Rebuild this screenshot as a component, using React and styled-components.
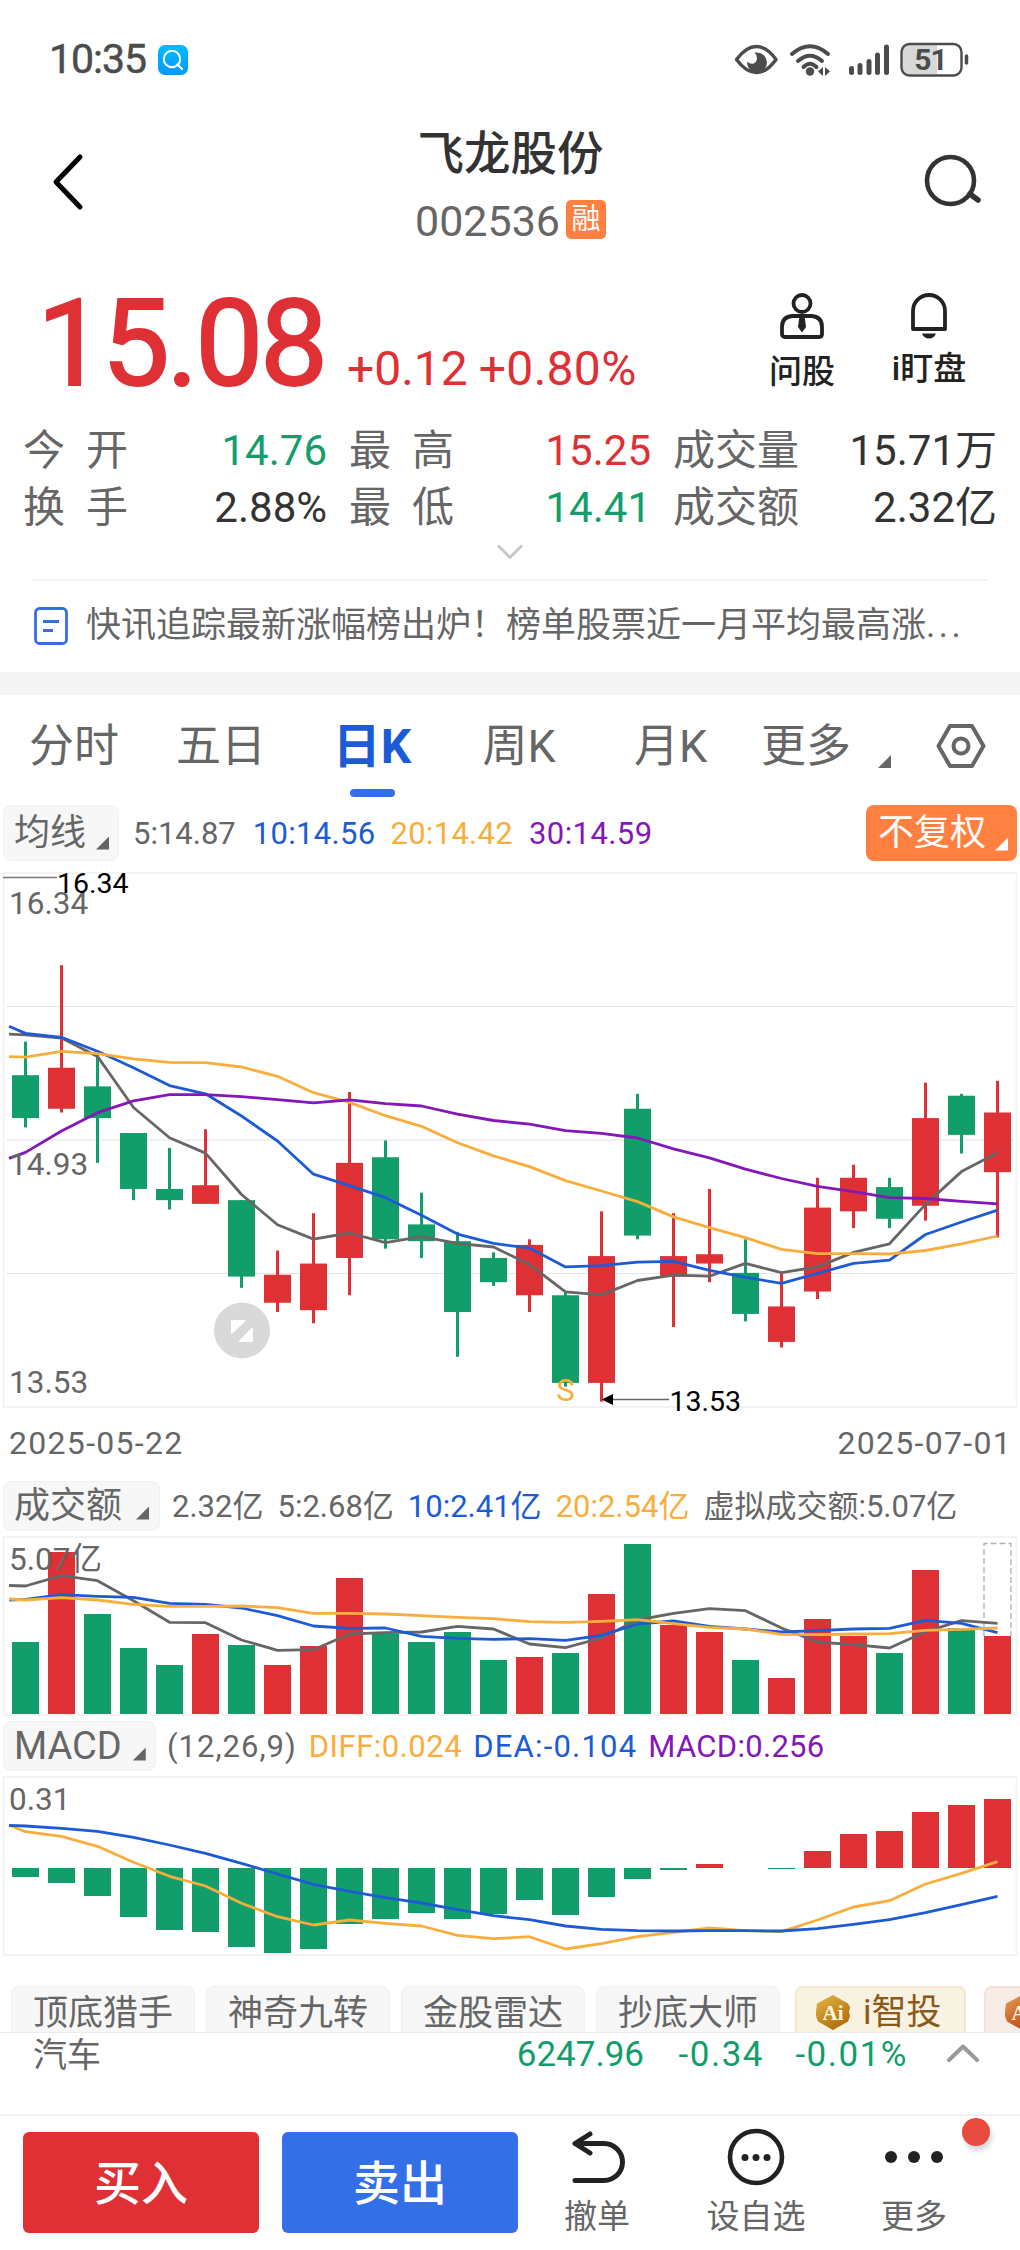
import React from 'react';
import styled, { createGlobalStyle } from 'styled-components';

const RED = '#df3035';
const GREEN = '#129e6a';
const BLUE = '#1d5bd6';
const ORANGE = '#f8ae3c';
const PURPLE = '#8417b8';
const GREY = '#666666';

const GlobalStyle = createGlobalStyle`
    * {
        box-sizing: border-box;
    }
    body {
        margin: 0;
        background: #fff;
        font-family: Roboto, "Noto Sans CJK SC", sans-serif;
        line-height: 1;
        color: #333;
    }
    svg {
        display: block;
        flex: none;
        overflow: visible;
    }
`
const Screen = styled.div`
    width: 1020px;
    height: 2250px;
    overflow: hidden;
    background: #fff;
    white-space: nowrap;
`

/* ---------- status bar ---------- */
const StatusBar = styled.div`
    display: flex;
    align-items: center;
    justify-content: space-between;
    height: 119px;
    padding: 0 51px 0 49px;
`
const Clock = styled.div`
    display: flex;
    align-items: center;
    gap: 12px;
    font-size: 41px;
    letter-spacing: -1px;
    -webkit-text-stroke: 0.5px #4c4c4c;
    color: #4c4c4c;
`
const StatusIcons = styled.div`
    display: flex;
    align-items: center;
`

/* ---------- header ---------- */
const Header = styled.div`
    display: grid;
    grid-template-columns: 1fr auto 1fr;
    align-items: center;
    height: 125px;
    padding: 0 38px 0 52px;
`
const HeaderEnd = styled.div`
    display: flex;
    justify-content: flex-end;
`
const TitleBlock = styled.div`
    display: flex;
    flex-direction: column;
    align-items: center;
    height: 125px;
    padding-top: 8px;
    margin-left: -13px;
`
const StockName = styled.div`
    font-size: 46.5px;
    line-height: 54px;
    font-weight: 500;
`
const StockCode = styled.div`
    display: flex;
    align-items: center;
    gap: 6px;
    margin-top: 19px;
    font-size: 43px;
    line-height: 43px;
    color: ${GREY};
`
const MarginBadge = styled.span`
    width: 40px;
    height: 39px;
    margin-bottom: 4px;
    border-radius: 5px;
    background: #ff8040;
    color: #fff;
    font-size: 29px;
    line-height: 39px;
    text-align: center;
`

/* ---------- quote ---------- */
const QuoteTop = styled.div`
    display: flex;
    justify-content: space-between;
    height: 161px;
    padding: 40px 53px 0 37px;
`
const PriceGroup = styled.div`
    display: flex;
    align-items: baseline;
    height: 121px;
    color: ${RED};
`
const Price = styled.span`
    width: 287px;
    font-size: 121px;
    letter-spacing: -3.2px;
    -webkit-text-stroke: 2px ${RED};
`
const Change = styled.span`
    margin-left: ${(props) => props.$gap}px;
    font-size: 48px;
    letter-spacing: ${(props) => props.$spacing || 0}px;
`
const Actions = styled.div`
    display: flex;
    gap: 57px;
    padding-top: 9px;
`
const Action = styled.div`
    display: flex;
    flex-direction: column;
    align-items: center;
    width: ${(props) => props.$width}px;
    color: #222;
    font-size: 33px;
    font-weight: 500;
    span {
        margin-top: ${(props) => props.$gap}px;
    }
`
const Stats = styled.div`
    display: grid;
    grid-template-columns: 304px 302px 324px;
    grid-auto-rows: 57px;
    column-gap: 22px;
    padding: 17px 0 0 23px;
    height: 131px;
`
const Stat = styled.div`
    display: flex;
    align-items: center;
    justify-content: space-between;
    font-size: 42px;
`
const StatLabel = styled.span`
    display: flex;
    justify-content: space-between;
    width: ${(props) => (props.$wide ? 125 : 105)}px;
    color: ${GREY};
`
const StatValue = styled.span`
    color: ${(props) => props.$color || '#333'};
`
const Expand = styled.div`
    display: flex;
    justify-content: center;
    height: 43px;
    padding-top: 7px;
`
const News = styled.div`
    display: flex;
    align-items: center;
    height: 93px;
    margin: 0 32px;
    padding: 0 0 2px 2px;
    border-top: 2px solid #f3f3f3;
    color: ${GREY};
    font-size: 35px;
    span {
        margin-left: 18px;
    }
    b {
        font-weight: 400;
        letter-spacing: 3.5px;
    }
`
const Band = styled.div`
    height: 23px;
    background: #f4f4f4;
`

/* ---------- tabs ---------- */
const Tabs = styled.div`
    display: flex;
    height: 102px;
`
const Tab = styled.div`
    display: flex;
    flex-direction: column;
    align-items: center;
    justify-content: space-between;
    width: ${(props) => props.$width}px;
    font-size: ${(props) => (props.$active ? 48 : 45)}px;
    line-height: 104px;
    font-weight: ${(props) => (props.$active ? 700 : 400)};
    color: ${(props) => (props.$active ? BLUE : GREY)};
    &::after {
        content: '';
        width: 45px;
        height: 8px;
        margin-top: -13px;
        border-radius: 4px;
        background: ${(props) => (props.$active ? '#336fe6' : 'transparent')};
    }
`
const MoreTab = styled.div`
    display: flex;
    align-items: center;
    padding-left: 8px;
    font-size: 45px;
    color: ${GREY};
`
const Corner = styled.i`
    width: 13px;
    height: 13px;
    margin: ${(props) => props.$margin};
    background: currentColor;
    clip-path: polygon(100% 0, 100% 100%, 0 100%);
`

/* ---------- indicator headers ---------- */
const IndicatorRow = styled.div`
    display: flex;
    align-items: center;
    height: ${(props) => props.$height}px;
    margin-top: ${(props) => props.$top}px;
    padding: 0 3px;
`
const Picker = styled.div`
    display: flex;
    align-items: center;
    width: ${(props) => props.$width}px;
    height: 100%;
    padding-left: 10px;
    border: 1px solid #f0f0f0;
    border-radius: 8px;
    background: #f7f7f7;
    color: ${GREY};
    font-size: ${(props) => props.$size || 36}px;
`
const Reading = styled.span`
    margin-left: ${(props) => props.$gap}px;
    font-size: 31px;
    letter-spacing: ${(props) => props.$spacing || 0}px;
    color: ${(props) => props.$color || GREY};
`
const AdjustButton = styled.div`
    display: flex;
    align-items: center;
    width: 151px;
    height: 56px;
    margin-left: auto;
    padding-left: 12px;
    border-radius: 8px;
    background: #ff8040;
    color: #fff;
    font-size: 36px;
`
const ChartBox = styled.div`
    margin-top: ${(props) => props.$top}px;
`
const Dates = styled.div`
    display: flex;
    align-items: center;
    justify-content: space-between;
    height: 69px;
    padding: 0 8px 0 9px;
    color: ${GREY};
    font-size: 32px;
    letter-spacing: 1.3px;
`

/* ---------- strategy chips ---------- */
const Chips = styled.div`
    display: flex;
    gap: 11px;
    height: 46px;
    margin-top: 30px;
    padding-left: 11px;
    overflow: hidden;
`
const Chip = styled.div`
    flex: none;
    width: 184px;
    height: 60px;
    border: 1px solid #efefef;
    border-radius: 8px;
    background: #f7f7f7;
    color: ${GREY};
    font-size: 35px;
    line-height: 54px;
    text-align: center;
`
const SmartChip = styled(Chip)`
    display: flex;
    align-items: center;
    gap: 12px;
    width: 171px;
    margin-left: ${(props) => props.$gap}px;
    padding: 0 0 7px 18px;
    border: 2px solid ${(props) => props.$border};
    background: ${(props) => props.$fill};
    color: #8c5a18;
`

/* ---------- sector quote ---------- */
const Sector = styled.div`
    display: flex;
    height: 82px;
    padding: 5px 40px 0 33px;
    border-top: 1px solid #ebebeb;
    font-size: 34px;
    line-height: 34px;
    color: ${GREY};
    svg {
        margin: 5px 0 0 auto;
    }
`
const SectorValue = styled.span`
    width: ${(props) => props.$width}px;
    margin-left: ${(props) => props.$gap}px;
    color: ${GREEN};
    font-size: 35px;
    letter-spacing: ${(props) => props.$spacing || 0}px;
    text-align: right;
`

/* ---------- bottom bar ---------- */
const BottomBar = styled.div`
    display: flex;
    height: 136px;
    padding: 16px 0 0 23px;
    border-top: 2px solid #f1f1f1;
`
const TradeButton = styled.div`
    width: 236px;
    height: 101px;
    margin-right: 23px;
    border-radius: 6px;
    background: ${(props) => props.$color};
    color: #fff;
    font-size: 47px;
    font-weight: 500;
    line-height: 103px;
    text-align: center;
`
const Tool = styled.div`
    position: relative;
    display: flex;
    flex-direction: column;
    align-items: center;
    width: ${(props) => props.$width}px;
    margin-left: ${(props) => props.$gap}px;
    color: ${GREY};
    font-size: 33px;
    span {
        margin-top: 14px;
    }
`
const RedDot = styled.i`
    position: absolute;
    top: -14px;
    right: -43px;
    width: 28px;
    height: 28px;
    border-radius: 50%;
    background: #e74c3f;
    box-shadow: 2px 5px 5px rgba(0, 0, 0, 0.15);
`

// [open, close, high, low, up]
const candles = [
    [15.28, 15.05, 15.46, 15.0, 0],
    [15.1, 15.32, 15.87, 15.08, 1],
    [15.22, 15.05, 15.4, 14.81, 0],
    [14.97, 14.67, 14.97, 14.61, 0],
    [14.67, 14.61, 14.89, 14.56, 0],
    [14.59, 14.69, 14.99, 14.59, 1],
    [14.61, 14.2, 14.61, 14.14, 0],
    [14.06, 14.21, 14.34, 14.01, 1],
    [14.02, 14.27, 14.54, 13.95, 1],
    [14.3, 14.81, 15.19, 14.1, 1],
    [14.84, 14.4, 14.93, 14.35, 0],
    [14.48, 14.39, 14.65, 14.3, 0],
    [14.39, 14.01, 14.44, 13.77, 0],
    [14.3, 14.17, 14.33, 14.15, 0],
    [14.1, 14.37, 14.4, 14.01, 1],
    [14.1, 13.63, 14.12, 13.61, 0],
    [13.63, 14.31, 14.55, 13.53, 1],
    [15.1, 14.42, 15.18, 14.4, 0],
    [14.2, 14.31, 14.54, 13.93, 1],
    [14.27, 14.32, 14.67, 14.17, 1],
    [14.22, 14.0, 14.4, 13.96, 0],
    [13.85, 14.04, 14.22, 13.82, 1],
    [14.12, 14.57, 14.73, 14.08, 1],
    [14.55, 14.73, 14.8, 14.46, 1],
    [14.68, 14.51, 14.73, 14.46, 0],
    [14.58, 15.05, 15.24, 14.5, 1],
    [15.17, 14.96, 15.18, 14.86, 0],
    [14.76, 15.08, 15.25, 14.41, 1],
];

const ma = {
    5: [15.5, 15.496, 15.479, 15.381, 15.107, 14.945, 14.862, 14.64, 14.478, 14.401, 14.434, 14.382, 14.414, 14.378, 14.359, 14.265, 14.118, 14.102, 14.179, 14.208, 14.202, 14.271, 14.221, 14.252, 14.33, 14.376, 14.587, 14.763, 14.864],
    10: [15.542, 15.504, 15.483, 15.408, 15.32, 15.224, 15.18, 15.061, 14.927, 14.749, 14.688, 14.623, 14.529, 14.428, 14.378, 14.353, 14.252, 14.259, 14.278, 14.282, 14.234, 14.196, 14.164, 14.217, 14.271, 14.288, 14.426, 14.493, 14.556],
    20: [15.379, 15.377, 15.408, 15.396, 15.368, 15.349, 15.347, 15.324, 15.274, 15.186, 15.134, 15.063, 15.006, 14.918, 14.847, 14.79, 14.715, 14.659, 14.602, 14.52, 14.462, 14.409, 14.346, 14.323, 14.323, 14.321, 14.34, 14.376, 14.418],
    30: [14.834, 14.866, 14.981, 15.079, 15.142, 15.176, 15.176, 15.165, 15.149, 15.132, 15.148, 15.127, 15.115, 15.071, 15.037, 15.017, 14.983, 14.968, 14.943, 14.885, 14.837, 14.776, 14.726, 14.684, 14.656, 14.623, 14.619, 14.604, 14.59],
};

const volumes = [72, 162, 100, 66, 49, 80, 69, 49, 68, 136, 80, 72, 82, 54, 57, 61, 120, 170, 89, 82, 54, 36, 95, 78, 61, 144, 86, 78];

const volumeMa = {
    5: [49.5, 50, 39.7, 44.7, 64.7, 86.3, 86.7, 104, 114.3, 113.7, 98, 96.7, 96, 90.3, 93, 108, 111.7, 102, 84, 77.3, 72.7, 74.7, 92, 106, 108.7, 112, 95.7, 84.7, 87.3],
    10: [64, 63.3, 58.7, 60.3, 61.3, 67.3, 68.3, 72, 79.7, 90, 92.3, 92, 100.3, 102.3, 103.3, 102.7, 104.3, 99.3, 88, 85, 90.3, 93, 96, 94.7, 93, 92.3, 84.3, 87.3, 96.7],
    20: [63, 64, 61.7, 64, 68.3, 70.3, 70.3, 70, 71.7, 77.3, 77.3, 78, 79.7, 81.3, 82.7, 85.7, 86.3, 85.3, 83.7, 87.7, 91.3, 93, 98.3, 98.7, 98, 97.7, 94.3, 93.3, 92],
};

const macdBars = [-9, -15, -28, -49, -62, -64, -79, -85, -81, -56, -51, -45, -51, -46, -32, -47, -29, -11, -2, 4, 0, -1, 17, 34, 37, 56, 63, 69];
const diffLine = [49.3, 55.7, 60.3, 70.3, 86.3, 100.3, 110, 127.3, 140.7, 149, 144, 147.3, 150, 159.3, 162.7, 160.7, 173, 167.7, 160.7, 156.3, 152, 154.7, 155.7, 144, 131, 124.7, 108, 97.3, 85.7];
const deaLine = [49.3, 50, 52.3, 55.3, 61.3, 69, 77.3, 87.3, 98, 108.3, 115.3, 121.7, 127, 133.7, 139.7, 143.7, 150, 153.3, 154.7, 155, 154.7, 154.7, 155, 152.7, 148.3, 143.7, 136.7, 128.7, 120.3];

const STEP = 36;
const barX = (i) => 12 + i * STEP;
const midX = (i) => 25.5 + i * STEP;
const priceY = (p) => 5.5 + (16.34 - p) * 186.5;

// the first value of every line sits on the left edge, the rest on bar centres
const Line = ({ values, color, scale = (v) => v }) => (
    <polyline
        points={values.map((v, i) => `${i === 0 ? 9 : midX(i - 1)},${scale(v).toFixed(1)}`).join(' ')}
        fill="none"
        stroke={color}
        strokeWidth="2.8"
        strokeLinejoin="round"
    />
)

const CandleChart = () => (
    <svg width="1020" height="536" viewBox="0 0 1020 536">
        <rect x="3.5" y="1" width="1013" height="534" fill="none" stroke="#f1f1f1" strokeWidth="1.6" />
        <path d="M6 134.5H1014M6 401.5H1014" stroke="#e6e6e6" strokeWidth="1" />
        <path d="M6 268H1014" stroke="#f1f1f1" strokeWidth="2" />
        {candles.map(([open, close, high, low, up], i) => {
            const top = priceY(Math.max(open, close));
            const bottom = priceY(Math.min(open, close));
            return (
                <g key={i} fill={up ? RED : GREEN}>
                    <rect x={midX(i) - 1.5} y={priceY(high)} width="3" height={priceY(low) - priceY(high)} />
                    <rect x={barX(i)} y={top} width="27" height={bottom - top} />
                </g>
            )
        })}
        <Line values={ma[5]} color={GREY} scale={priceY} />
        <Line values={ma[10]} color={BLUE} scale={priceY} />
        <Line values={ma[20]} color={ORANGE} scale={priceY} />
        <Line values={ma[30]} color={PURPLE} scale={priceY} />
        <g fill={GREY} fontSize="31.5">
            <text x="9" y="42">16.34</text>
            <text x="9" y="303">14.93</text>
            <text x="9" y="521">13.53</text>
        </g>
        <path d="M3 5.5H57" stroke="#777" strokeWidth="1.6" />
        <text x="57" y="21" fontSize="28.5" fill="#000">16.34</text>
        <circle cx="242" cy="458.5" r="28" fill="#d9d9d9" />
        <path d="M232.5 448H244.5Q246 448 245 449.5L233 461Q231 462.5 231 460.5V449.5Q231 448 232.5 448ZM251.5 470H239.5Q238 470 239.5 468.5L251 456.5Q253 455 253 457V468.5Q253 470 251.5 470Z" fill="#fff" />
        <text x="565.5" y="529" fontSize="31" fill={ORANGE} textAnchor="middle">S</text>
        <path d="M610 527.5H669" stroke="#666" strokeWidth="1.6" />
        <path d="M601.5 527.5L613 522V533Z" fill="#000" />
        <text x="669.5" y="539" fontSize="28.5" fill="#000">13.53</text>
    </svg>
)

const VolumeChart = () => (
    <svg width="1020" height="180" viewBox="0 0 1020 180">
        <rect x="3.5" y="1" width="1013" height="178" fill="none" stroke="#f1f1f1" strokeWidth="1.6" />
        {volumes.map((v, i) => (
            <rect key={i} x={barX(i)} y={178 - v} width="27" height={v} fill={candles[i][4] ? RED : GREEN} />
        ))}
        <path d="M984 100V7.5H1011V100" fill="none" stroke="#b0b0b0" strokeWidth="1.3" strokeDasharray="6 3" />
        <Line values={volumeMa[5]} color={GREY} />
        <Line values={volumeMa[10]} color={BLUE} />
        <Line values={volumeMa[20]} color={ORANGE} />
        <text x="9" y="34" fontSize="31.5" fill={GREY}>5.07亿</text>
    </svg>
)

const MacdChart = () => (
    <svg width="1020" height="180" viewBox="0 0 1020 180">
        <rect x="3.5" y="1" width="1013" height="178" fill="none" stroke="#f1f1f1" strokeWidth="1.6" />
        {macdBars.map((v, i) => (
            <rect key={i} x={barX(i)} y={v > 0 ? 92 - v : 92} width="27" height={Math.abs(v)} fill={v > 0 ? RED : GREEN} />
        ))}
        <Line values={diffLine} color={ORANGE} />
        <Line values={deaLine} color={BLUE} />
        <text x="9" y="34" fontSize="31.5" fill={GREY}>0.31</text>
    </svg>
)

const SearchAppIcon = () => (
    <svg width="30" height="30" viewBox="0 0 30 30" fill="none">
        <defs>
            <linearGradient id="app" x1="0" y1="0" x2="0" y2="1">
                <stop offset="0" stopColor="#00bdff" />
                <stop offset="1" stopColor="#0099ff" />
            </linearGradient>
        </defs>
        <rect width="30" height="30" rx="7" fill="url(#app)" />
        <circle cx="14" cy="14" r="8.2" stroke="#fff" strokeWidth="2" />
        <path d="M19.5 19.5L24 24" stroke="#fff" strokeWidth="2.2" strokeLinecap="round" />
    </svg>
)

const StatusGlyphs = () => (
    <svg width="235" height="36" viewBox="0 0 235 36" fill="none" stroke="#4c4c4c">
        <path d="M2.5 17.5Q12 4.5 22.5 4.5T42 17.5Q33 30.5 22.5 30.5T2.5 17.5Z" strokeWidth="3.4" strokeLinejoin="round" />
        <path d="M22.5 10.5A10 10 0 1 1 13 20Q20 24 22.5 18.5Q24 14 20.5 10.5Z" fill="#4c4c4c" stroke="none" />
        <g strokeWidth="4" strokeLinecap="round">
            <path d="M58 12Q76 -3.5 94 12M64 19Q76 8.5 88 19" />
            <path d="M69.5 25Q76 18.5 82.5 25" />
        </g>
        <circle cx="76" cy="29.5" r="4.2" fill="#4c4c4c" stroke="none" />
        <path d="M84 29.5L89 25V34ZM96 29.5L91 25V34Z" fill="#4c4c4c" stroke="none" />
        <g strokeWidth="5" strokeLinecap="round">
            <path d="M117.5 26.5V30.5M126 23.5V30.5M135 19.5V30.5M143.5 13V30.5M152.5 5V30.5" />
        </g>
        <path d="M174 3H203V32H174Q168 31 168 25V10Q168 4 174 3Z" fill="#d8d8d8" stroke="none" />
        <rect x="167.5" y="2" width="60" height="31.5" rx="8" strokeWidth="2.4" />
        <path d="M232.5 14V21" strokeWidth="3.5" strokeLinecap="round" />
        <text x="196.5" y="28.3" fontSize="30" fontWeight="700" letterSpacing="-1" fill="#4c4c4c" stroke="none" textAnchor="middle">51</text>
    </svg>
)

const AiHexagon = ({ from, to, id }) => (
    <svg width="36" height="37" viewBox="0 0 36 37">
        <defs>
            <linearGradient id={id} x1="0" y1="0" x2="0.6" y2="1">
                <stop offset="0" stopColor={from} />
                <stop offset="1" stopColor={to} />
            </linearGradient>
        </defs>
        <path d="M18 1L33 9.5L35 13L34 18.5L35 22L33 27.5L18 36L3 27.5L1 22V18L2 9.5Z" fill={`url(#${id})`} />
        <text x="18" y="26" fontSize="21" fontWeight="700" fontFamily="Liberation Serif, serif" fill="#fffbe0" textAnchor="middle">Ai</text>
    </svg>
)

const Letters = ({ text }) => text.split('').map((c) => <span key={c}>{c}</span>)

const stats = [
    ['今开', '14.76', GREEN],
    ['最高', '15.25', RED],
    ['成交量', '15.71万'],
    ['换手', '2.88%'],
    ['最低', '14.41', GREEN],
    ['成交额', '2.32亿'],
];

const tabs = [['分时', 148], ['五日', 146], ['日K', 156], ['周K', 138], ['月K', 165]];

const App = () => {
    return (
        <Screen>
            <GlobalStyle />
            <StatusBar>
                <Clock>10:35<SearchAppIcon /></Clock>
                <StatusIcons><StatusGlyphs /></StatusIcons>
            </StatusBar>

            <Header>
                <svg width="32" height="56" viewBox="0 0 32 56" fill="none" stroke="#000" strokeWidth="5" strokeLinecap="round" strokeLinejoin="round">
                    <path d="M28 3L4 28L28 53" />
                </svg>
                <TitleBlock>
                    <StockName>飞龙股份</StockName>
                    <StockCode>002536<MarginBadge>融</MarginBadge></StockCode>
                </TitleBlock>
                <HeaderEnd>
                    <svg width="60" height="56" viewBox="0 0 60 56" fill="none" stroke="#333" strokeWidth="4.6" strokeLinecap="round">
                        <circle cx="28.5" cy="26.5" r="23.5" />
                        <path d="M48 40L56 46" strokeWidth="5.5" />
                    </svg>
                </HeaderEnd>
            </Header>

            <QuoteTop>
                <PriceGroup>
                    <Price>15.08</Price>
                    <Change $gap={23}>+0.12</Change>
                    <Change $gap={11} $spacing={0.3}>+0.80%</Change>
                </PriceGroup>
                <Actions>
                    <Action $width={64} $gap={16}>
                        <svg width="44" height="46" viewBox="0 0 44 46" fill="none" stroke="#222" strokeWidth="3.8">
                            <circle cx="22" cy="10.5" r="8.5" />
                            <path d="M12 23H32Q42 24 42 34V41Q42 44 39 44H5Q2 44 2 41V34Q2 24 12 23Z" />
                            <path d="M19.5 23H24.5L26 34L22 39.5L18 34Z" fill="#222" stroke="none" />
                        </svg>
                        <span>问股</span>
                    </Action>
                    <Action $width={76} $gap={13}>
                        <svg width="40" height="46" viewBox="0 0 40 46" fill="none" stroke="#222" strokeWidth="3.8">
                            <path d="M4 36V18A16 16 0 0 1 36 18V36Z" strokeLinejoin="round" />
                            <path d="M13 40.5H27Q25 45.5 20 45.5T13 40.5Z" fill="#222" stroke="none" />
                        </svg>
                        <span>i盯盘</span>
                    </Action>
                </Actions>
            </QuoteTop>

            <Stats>
                {stats.map(([label, value, color]) => (
                    <Stat key={label}>
                        <StatLabel $wide={label.length > 2}><Letters text={label} /></StatLabel>
                        <StatValue $color={color}>{value}</StatValue>
                    </Stat>
                ))}
            </Stats>
            <Expand>
                <svg width="28" height="18" viewBox="0 0 28 18" fill="none" stroke="#c8c8c8" strokeWidth="3">
                    <path d="M2 2.5L14 14.5L26 2.5" />
                </svg>
            </Expand>
            <News>
                <svg width="34" height="38" viewBox="0 0 34 38" fill="none" stroke="#336fe0" strokeWidth="2.8">
                    <rect x="1.5" y="1.5" width="31" height="35" rx="4" />
                    <path d="M9 14.5H25M9 23.5H19" />
                </svg>
                <span>快讯追踪最新涨幅榜出炉！榜单股票近一月平均最高涨<b>...</b></span>
            </News>
            <Band />

            <Tabs>
                {tabs.map(([name, width]) => (
                    <Tab key={name} $width={width} $active={name === '日K'}>{name}</Tab>
                ))}
                <MoreTab>
                    更多
                    <Corner $margin="31px 45px 0 27px" />
                    <svg width="50" height="46" viewBox="0 0 50 46" fill="none" stroke="#666" strokeWidth="4" strokeLinejoin="round">
                        <path d="M14 3H36L47.5 23L36 43H14L2.5 23Z" />
                        <circle cx="25" cy="23" r="7.5" />
                    </svg>
                </MoreTab>
            </Tabs>

            <IndicatorRow $height={56} $top={8}>
                <Picker $width={116}>均线<Corner $margin="20px 0 0 10px" /></Picker>
                <Reading $gap={14}>5:14.87</Reading>
                <Reading $gap={17} $spacing={0.3} $color={BLUE}>10:14.56</Reading>
                <Reading $gap={15} $spacing={0.3} $color={ORANGE}>20:14.42</Reading>
                <Reading $gap={16} $spacing={0.4} $color={PURPLE}>30:14.59</Reading>
                <AdjustButton>不复权<Corner $margin="22px 0 0 9px" /></AdjustButton>
            </IndicatorRow>
            <ChartBox $top={11}><CandleChart /></ChartBox>
            <Dates>
                <span>2025-05-22</span>
                <span>2025-07-01</span>
            </Dates>

            <IndicatorRow $height={50} $top={4}>
                <Picker $width={157}>成交额<Corner $margin="14px 0 0 14px" /></Picker>
                <Reading $gap={12}>2.32亿</Reading>
                <Reading $gap={14}>5:2.68亿</Reading>
                <Reading $gap={14} $color={BLUE}>10:2.41亿</Reading>
                <Reading $gap={14} $color={ORANGE}>20:2.54亿</Reading>
                <Reading $gap={14}>虚拟成交额:5.07亿</Reading>
            </IndicatorRow>
            <ChartBox $top={5}><VolumeChart /></ChartBox>

            <IndicatorRow $height={50} $top={5}>
                <Picker $width={153} $size={38}>MACD<Corner $margin="16px 0 0 11px" /></Picker>
                <Reading $gap={11} $spacing={1}>(12,26,9)</Reading>
                <Reading $gap={12} $spacing={0.5} $color={ORANGE}>DIFF:0.024</Reading>
                <Reading $gap={11} $spacing={1.2} $color={BLUE}>DEA:-0.104</Reading>
                <Reading $gap={11} $spacing={0.3} $color={PURPLE}>MACD:0.256</Reading>
            </IndicatorRow>
            <ChartBox $top={5}><MacdChart /></ChartBox>

            <Chips>
                <Chip>顶底猎手</Chip>
                <Chip>神奇九转</Chip>
                <Chip>金股雷达</Chip>
                <Chip>抄底大师</Chip>
                <SmartChip $gap={4} $border="#f3e8d0" $fill="#f7f2e2">
                    <AiHexagon id="gold" from="#e6b64a" to="#b06f0c" />i智投
                </SmartChip>
                <SmartChip $gap={7} $border="#f3e2d8" $fill="#f8ece7">
                    <AiHexagon id="copper" from="#ea9a58" to="#b84a10" />
                </SmartChip>
            </Chips>
            <Sector>
                汽车
                <SectorValue $gap={399} $width={144}>6247.96</SectorValue>
                <SectorValue $gap={19} $width={101} $spacing={1.5}>-0.34</SectorValue>
                <SectorValue $gap={20} $width={124} $spacing={1.5}>-0.01%</SectorValue>
                <svg width="34" height="20" viewBox="0 0 34 20" fill="none" stroke="#999" strokeWidth="4" strokeLinecap="round" strokeLinejoin="round">
                    <path d="M3 17L17 3.5L31 17" />
                </svg>
            </Sector>

            <BottomBar>
                <TradeButton $color="#df3035">买入</TradeButton>
                <TradeButton $color="#336fe6">卖出</TradeButton>
                <Tool $gap={23} $width={66}>
                    <svg width="60" height="54" viewBox="0 0 60 54" fill="none" stroke="#222" strokeWidth="5" strokeLinecap="round" strokeLinejoin="round">
                        <path d="M23 2L8 11.5L23 21M8 11.5H37A18.5 18.5 0 0 1 37 48.5H8" />
                    </svg>
                    <span>撤单</span>
                </Tool>
                <Tool $gap={76} $width={100}>
                    <svg width="58" height="54" viewBox="0 0 58 54" fill="#222">
                        <circle cx="29" cy="25" r="26" fill="none" stroke="#222" strokeWidth="4.6" />
                        <circle cx="18" cy="25.5" r="3.5" />
                        <circle cx="29" cy="25.5" r="3.5" />
                        <circle cx="40" cy="25.5" r="3.5" />
                    </svg>
                    <span>设自选</span>
                </Tool>
                <Tool $gap={75} $width={66}>
                    <svg width="60" height="54" viewBox="0 0 60 54" fill="#222">
                        <circle cx="7" cy="25" r="6" />
                        <circle cx="30" cy="25" r="6" />
                        <circle cx="53" cy="25" r="6" />
                    </svg>
                    <span>更多</span>
                    <RedDot />
                </Tool>
            </BottomBar>
        </Screen>
    )
}

export default App
